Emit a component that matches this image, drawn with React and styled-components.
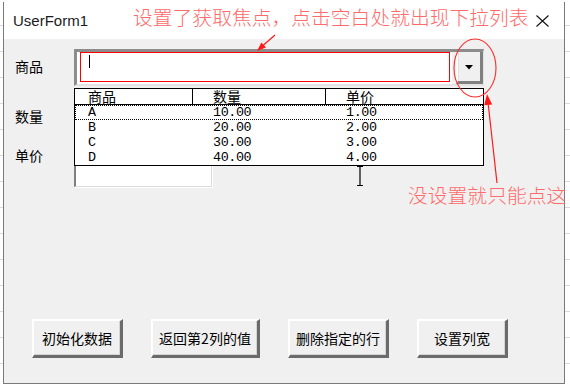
import React from "react";
import styled, { createGlobalStyle } from "styled-components";

const GlobalStyle = createGlobalStyle`
  html, body {
    margin: 0;
    padding: 0;
  }
  body {
    width: 570px;
    height: 387px;
    overflow: hidden;
    background: #fff repeating-linear-gradient(to bottom, transparent 0 25px, #d9d9d9 25px 26px);
    font-family: "Noto Sans CJK SC", sans-serif;
  }
`;

const Page = styled.div`
  position: relative;
  width: 570px;
  height: 387px;
  padding: 2px 0 0 3px;
  box-sizing: border-box;
`;

const Window = styled.div`
  width: 562px;
  height: 382px;
  box-sizing: border-box;
  border: 1px solid #7a7a7a;
  border-top: none;
  display: flex;
  flex-direction: column;
  background: #f0f0f0;
`;

const TitleBar = styled.div`
  height: 37px;
  flex-shrink: 0;
  background: #fff;
  display: flex;
  align-items: center;
  justify-content: space-between;
  padding: 0 15px 0 9px;
  font-family: "Liberation Sans", Arial, sans-serif;
  font-size: 15px;
  color: #1b1b1b;
`;

const Client = styled.div`
  flex: 1;
  display: flex;
  flex-direction: column;
  padding: 10px 0 25px 0;
`;

const Form = styled.div`
  display: flex;
  flex-direction: column;
  padding-left: 11px;
`;

const FieldRow = styled.div`
  display: flex;
  align-items: flex-start;
  margin-top: ${(p) => p.$gap || 0}px;
`;

const Label = styled.div`
  width: 59px;
  height: ${(p) => p.$h}px;
  line-height: ${(p) => p.$h}px;
  font-size: 14px;
  color: #000;
`;

const ComboWrap = styled.div`
  position: relative;
  width: 410px;
`;

const Combo = styled.div`
  display: flex;
  height: 37px;
  box-sizing: border-box;
  border-top: 3px solid #8c8c8c;
  border-left: 3px solid #8c8c8c;
  border-bottom: 2px solid #e3e3e3;
  border-right: 1px solid #e3e3e3;
  background: #f0f0f0;
  gap: 4px;
`;

const TextArea = styled.div`
  width: 375px;
  height: 32px;
  box-sizing: border-box;
  background: #fff;
  padding: 0 2px 2px 3px;
`;

const FocusBox = styled.div`
  height: 30px;
  box-sizing: border-box;
  border: 1px solid #ff0000;
  padding: 2px 0 0 8px;
`;

const Caret = styled.span`
  display: block;
  width: 1px;
  height: 13px;
  background: #000;
`;

const DropButton = styled.div`
  width: 27px;
  height: 32px;
  box-sizing: border-box;
  background: #f0f0f0;
  border-left: 2px solid #fdfdfd;
  border-right: 3px solid #808080;
  border-bottom: 3px solid #808080;
  box-shadow: inset 1px 0 0 #e0e0e0;
  display: flex;
  align-items: center;
  justify-content: center;
  padding-top: 2px;
`;

const DropList = styled.div`
  position: absolute;
  top: calc(100% + 2px);
  left: 0;
  width: 410px;
  box-sizing: border-box;
  border: 1px solid #000;
  background: #fff;
  z-index: 2;
`;

const Columns = styled.div`
  display: grid;
  grid-template-columns: 118px 133px 1fr;
  height: 15px;
  line-height: 15px;
`;

const HeaderRow = styled(Columns)`
  height: 16px;
  border-bottom: 1px solid #000;
  box-sizing: border-box;
  font-size: 14px;
  line-height: 14px;
  color: #000;
`;

const DataRow = styled(Columns)`
  font-family: "Liberation Mono", "Courier New", monospace;
  font-size: 13.4px;
  letter-spacing: -0.4px;
  color: #000;
  outline: ${(p) => (p.$focus ? "1px dotted #000" : "none")};
  outline-offset: -1px;
`;

const Cell = styled.div`
  padding-left: ${(p) => p.$pad}px;
  border-right: ${(p) => (p.$divider ? "1px solid #000" : "none")};
  white-space: nowrap;
`;

const TextBox = styled.div`
  width: 138px;
  height: ${(p) => p.$h}px;
  box-sizing: border-box;
  background: #fff;
  border-style: solid;
  border-width: 2px 1px 1px 2px;
  border-color: #808080 #dcdcdc #dcdcdc #808080;
  box-shadow: 1px 1px 0 #fff;
`;

const ButtonRow = styled.div`
  margin-top: auto;
  display: flex;
  gap: 28px;
  padding-left: 28px;
`;

const Button = styled.button`
  width: ${(p) => p.$w}px;
  height: 39px;
  box-sizing: border-box;
  padding: 0;
  background: #f0f0f0;
  border-style: solid;
  border-width: 2px 3px 3px 2px;
  border-color: #fff #6b6b6b #6b6b6b #fff;
  box-shadow: inset -1px -1px 0 #d4d4d4;
  font-family: "Noto Sans CJK SC", sans-serif;
  font-size: 14px;
  color: #000;
`;

const Overlay = styled.svg`
  position: absolute;
  left: 0;
  top: 0;
  pointer-events: none;
  z-index: 5;
`;

const Note = styled.div`
  position: absolute;
  left: ${(p) => p.$x}px;
  top: ${(p) => p.$y}px;
  z-index: 6;
  white-space: nowrap;
  font-family: "Noto Sans CJK SC", sans-serif;
  font-weight: 300;
  font-size: 19.8px;
  line-height: 20px;
  color: #ff6a6a;
`;

const columns = [
  { key: "name", title: "商品", pad: 13 },
  { key: "qty", title: "数量", pad: 20 },
  { key: "price", title: "单价", pad: 20 },
];

const rows = [
  { name: "A", qty: "10.00", price: "1.00" },
  { name: "B", qty: "20.00", price: "2.00" },
  { name: "C", qty: "30.00", price: "3.00" },
  { name: "D", qty: "40.00", price: "4.00" },
];

const buttons = [
  { label: "初始化数据", w: 91 },
  { label: "返回第2列的值", w: 109 },
  { label: "删除指定的行", w: 101 },
  { label: "设置列宽", w: 91 },
];

const CloseIcon = () => (
  <svg width="13" height="12" viewBox="0 0 13 12">
    <path d="M0.5 0.5L12.5 11.5M12.5 0.5L0.5 11.5" stroke="#111" strokeWidth="1.1" fill="none" />
  </svg>
);

const App = () => {
  return (
    <Page>
      <GlobalStyle />
      <Window>
        <TitleBar>
          <span>UserForm1</span>
          <CloseIcon />
        </TitleBar>
        <Client>
          <Form>
            <FieldRow>
              <Label $h={35}>商品</Label>
              <ComboWrap>
                <Combo>
                  <TextArea>
                    <FocusBox>
                      <Caret />
                    </FocusBox>
                  </TextArea>
                  <DropButton>
                    <svg width="8" height="5" viewBox="0 0 8 5">
                      <polygon points="0,0 8,0 4,4.5" fill="#000" />
                    </svg>
                  </DropButton>
                </Combo>
                <DropList>
                  <HeaderRow>
                    {columns.map((c, i) => (
                      <Cell key={c.key} $pad={c.pad} $divider={i < 2}>
                        {c.title}
                      </Cell>
                    ))}
                  </HeaderRow>
                  {rows.map((r, i) => (
                    <DataRow key={r.name} $focus={i === 0}>
                      {columns.map((c) => (
                        <Cell key={c.key} $pad={c.pad}>
                          {r[c.key]}
                        </Cell>
                      ))}
                    </DataRow>
                  ))}
                </DropList>
              </ComboWrap>
            </FieldRow>
            <FieldRow $gap={18}>
              <Label $h={24}>数量</Label>
              <TextBox $h={24} />
            </FieldRow>
            <FieldRow $gap={15}>
              <Label $h={24}>单价</Label>
              <TextBox $h={44} />
            </FieldRow>
          </Form>
          <ButtonRow>
            {buttons.map((b) => (
              <Button key={b.label} $w={b.w}>
                {b.label}
              </Button>
            ))}
          </ButtonRow>
        </Client>
      </Window>

      <Overlay width="570" height="387" viewBox="0 0 570 387">
        {/* mouse I-beam */}
        <path d="M357 166.5h6M360 166.5v19M357 185.5h6" stroke="#000" strokeWidth="1.2" fill="none" />
        <ellipse cx="475" cy="68" rx="21" ry="29" stroke="#ff2a2a" strokeWidth="1.1" fill="none" />
        <line x1="275" y1="35" x2="263" y2="45.5" stroke="#ff1a1a" strokeWidth="1.2" />
        <polygon points="257,51 266,47.6 261.4,42.4" fill="#ff1a1a" />
        <line x1="497" y1="183" x2="488.2" y2="104" stroke="#ff1a1a" strokeWidth="1.2" />
        <polygon points="487,94 492.2,104.5 484.2,105.3" fill="#ff1a1a" />
      </Overlay>
      <Note $x={133} $y={7}>设置了获取焦点，点击空白处就出现下拉列表</Note>
      <Note $x={408} $y={185}>没设置就只能点这</Note>
    </Page>
  );
};

export default App;
